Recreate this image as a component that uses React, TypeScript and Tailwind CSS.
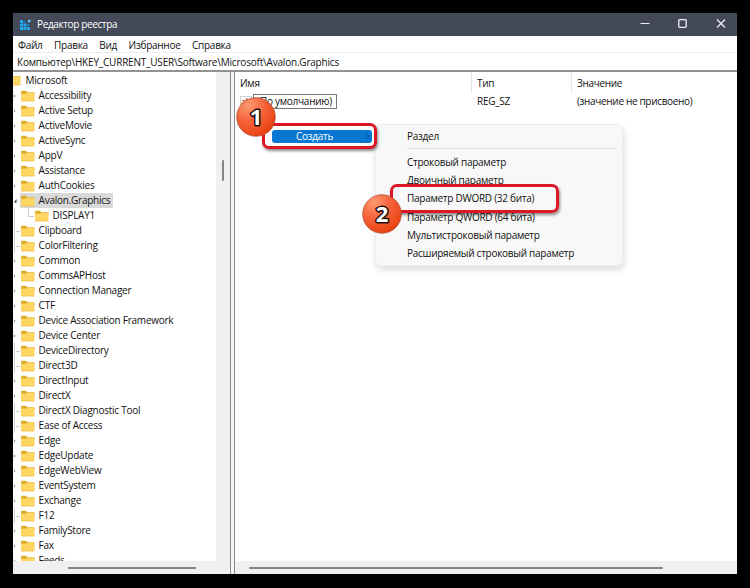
type TreeItem = { name: string; kind: 'closed' | 'open' | 'leaf' | 'child' }

const tree: TreeItem[] = [
  { name: 'Accessibility', kind: 'closed' },
  { name: 'Active Setup', kind: 'closed' },
  { name: 'ActiveMovie', kind: 'closed' },
  { name: 'ActiveSync', kind: 'closed' },
  { name: 'AppV', kind: 'closed' },
  { name: 'Assistance', kind: 'closed' },
  { name: 'AuthCookies', kind: 'closed' },
  { name: 'Avalon.Graphics', kind: 'open' },
  { name: 'DISPLAY1', kind: 'child' },
  { name: 'Clipboard', kind: 'leaf' },
  { name: 'ColorFiltering', kind: 'leaf' },
  { name: 'Common', kind: 'closed' },
  { name: 'CommsAPHost', kind: 'closed' },
  { name: 'Connection Manager', kind: 'closed' },
  { name: 'CTF', kind: 'closed' },
  { name: 'Device Association Framework', kind: 'closed' },
  { name: 'Device Center', kind: 'closed' },
  { name: 'DeviceDirectory', kind: 'leaf' },
  { name: 'Direct3D', kind: 'leaf' },
  { name: 'DirectInput', kind: 'closed' },
  { name: 'DirectX', kind: 'closed' },
  { name: 'DirectX Diagnostic Tool', kind: 'leaf' },
  { name: 'Ease of Access', kind: 'leaf' },
  { name: 'Edge', kind: 'closed' },
  { name: 'EdgeUpdate', kind: 'closed' },
  { name: 'EdgeWebView', kind: 'closed' },
  { name: 'EventSystem', kind: 'closed' },
  { name: 'Exchange', kind: 'closed' },
  { name: 'F12', kind: 'leaf' },
  { name: 'FamilyStore', kind: 'closed' },
  { name: 'Fax', kind: 'closed' },
  { name: 'Feeds', kind: 'closed' },
]

const createItems = [
  'Строковый параметр',
  'Двоичный параметр',
  'Параметр DWORD (32 бита)',
  'Параметр QWORD (64 бита)',
  'Мультистроковый параметр',
  'Расширяемый строковый параметр',
]

function FolderIcon() {
  return (
    <svg width="14" height="12" viewBox="0 0 14 12" className="block shrink-0">
      <path d="M0 1.5Q0 .7.8.7H5l1.3 1.5h6.4q.8 0 .8.9V5H0z" fill="#dfae2c" />
      <path d="M0 3.8H5L6.4 2.8h6.3q.8 0 .8.9v6.7q0 .9-.8.9H.8q-.8 0-.8-.9z" fill="#fdd663" />
      <path d="M.4 10.9h12.7" stroke="#efbd45" strokeWidth=".7" />
    </svg>
  )
}

function TreeMarker({ kind }: { kind: TreeItem['kind'] }) {
  return (
    <svg width="7" height="15" viewBox="0 0 7 15" className="block shrink-0">
      {kind === 'closed' && <path d="M1 6.8l1 1.2L1 9.2" fill="none" stroke="#8a8a8a" />}
      {kind === 'open' && <path d="M1 9.5h2.5V6z" fill="#222" />}
      {kind === 'leaf' && <path d="M1.5 0v15M3 8.5h4" stroke="#cfcfcf" />}
      {kind === 'child' && <path d="M1.5 0v15" stroke="#cfcfcf" />}
    </svg>
  )
}

function TreeRow({ item }: { item: TreeItem }) {
  return (
    <div className="flex h-[15.03px] shrink-0 items-center">
      <TreeMarker kind={item.kind} />
      {item.kind === 'child' && (
        <svg width="14" height="15" viewBox="0 0 14 15" className="block shrink-0">
          <path d="M8.5 0v8.5H14" fill="none" stroke="#c8c8c8" />
        </svg>
      )}
      <div
        className={`flex h-[15px] items-center gap-[3.6px] pl-[1px] pr-[3px] ${
          item.kind === 'open' ? 'bg-[#d9d9d9]' : ''
        }`}
      >
        <FolderIcon />
        <span>{item.name}</span>
      </div>
    </div>
  )
}

function Badge({ n }: { n: number }) {
  return (
    <svg width="44" height="44" viewBox="0 0 44 44" className="block">
      <defs>
        <radialGradient id={`badge${n}`} cx=".3" cy=".2" r=".85">
          <stop offset="0" stopColor="#fb9a72" />
          <stop offset=".5" stopColor="#f7623a" />
          <stop offset="1" stopColor="#e8400f" />
        </radialGradient>
      </defs>
      <circle cx="22" cy="22" r="19.3" fill={`url(#badge${n})`} stroke="#a8492f" strokeWidth=".7" />
      <text
        x="22"
        y="29.5"
        textAnchor="middle"
        fontSize="22"
        fontWeight="700"
        fill="#fff"
        stroke="#1c0d08"
        strokeWidth="3"
        paintOrder="stroke"
        strokeLinejoin="round"
      >
        {n}
      </text>
    </svg>
  )
}

function TitleBar() {
  return (
    <header className="flex h-[23px] shrink-0 items-center justify-between bg-[#444959] text-white">
      <div className="flex items-center gap-[5px] pl-[6px]">
        <svg width="13" height="12" viewBox="0 0 13 12" className="block">
          <path d="M1 1h3v3H1zM1 4.5h3v3H1zM1 8h3v3H1zM4.5 4.5h3v3h-3zM4.5 8h3v3h-3zM8 8h3v3H8z" fill="#21a9ed" />
          <path d="M4.5 2h2v2h-2zM8 5h2v2H8z" fill="#0f7fcb" />
          <path d="M9 1l2.5-.5V3L9 3.5z" fill="#55cbff" />
        </svg>
        <h1 className="tracking-[-0.37px]">Редактор реестра</h1>
      </div>
      <svg width="100" height="23" viewBox="0 0 100 23" fill="none" stroke="#eef0f4" className="block">
        <path d="M3.5 10.5h9" />
        <rect x="41.8" y="6.7" width="7.4" height="7.6" rx=".8" strokeWidth="1.3" />
        <path d="M80 6.5l8 8M88 6.5l-8 8" strokeWidth="1.2" />
      </svg>
    </header>
  )
}

function TreePane() {
  return (
    <nav className="flex w-[217px] shrink-0 flex-col">
      <div className="flex min-h-0 flex-1">
        <div className="flex min-w-0 flex-1 flex-col overflow-hidden whitespace-nowrap tracking-[-0.25px]">
          <div className="flex h-[16px] shrink-0 items-center">
            <div className="flex w-[8px] shrink-0 justify-end overflow-hidden">
              <FolderIcon />
            </div>
            <span className="pl-[4.5px]">Microsoft</span>
          </div>
          {tree.map((item) => (
            <TreeRow key={item.name} item={item} />
          ))}
        </div>
        <div className="flex w-[14px] shrink-0 justify-center bg-[#f0f0f0] pt-[88px]">
          <div className="h-[21px] w-[2px] rounded bg-[#858585]" />
        </div>
      </div>
      <div className="flex h-[13px] shrink-0 items-center bg-[#f0f0f0] pl-[55px]">
        <div className="h-[2px] w-[128px] rounded bg-[#858585]" />
      </div>
    </nav>
  )
}

function CreateMenu() {
  return (
    <div className="absolute left-[362px] top-[111px] h-[142px] w-[248px] rounded-md border border-[#ededed] bg-[#f8f8f8] pl-[31px] pr-[5px] shadow-[1px_4px_7px_rgba(0,0,0,0.13)]">
      <div className="flex h-[22px] items-center">Раздел</div>
      <div className="mb-[4px] mt-[1px] h-px bg-[#dedede]" />
      {createItems.map((label) => (
        <div key={label} className="flex h-[18.35px] items-center whitespace-nowrap">
          {label}
        </div>
      ))}
    </div>
  )
}

export default function App() {
  return (
    <div className="h-[588px] w-[750px] overflow-hidden bg-black p-[13px] font-['Open_Sans','Noto_Sans',sans-serif] text-[10px] leading-[15px] tracking-[-0.27px] text-[#111]">
      <div className="relative flex h-[561px] w-[724px] flex-col bg-white">
        <TitleBar />
        <div className="flex h-[17px] shrink-0 items-center gap-[11.5px] border-b border-[#ededed] pl-[5px] pt-[2px]">
          {['Файл', 'Правка', 'Вид', 'Избранное', 'Справка'].map((m) => (
            <span key={m}>{m}</span>
          ))}
        </div>
        <div className="flex h-[19px] shrink-0 items-center border-b-2 border-[#929292] pl-[4px] pt-[2px] tracking-[-0.2px]">
          Компьютер\HKEY_CURRENT_USER\Software\Microsoft\Avalon.Graphics
        </div>
        <div className="flex min-h-0 flex-1">
          <TreePane />
          <div className="w-[5px] shrink-0 border-x border-[#8c8c8c] bg-[#f4f4f4]" />
          <main className="flex min-w-0 flex-1 flex-col">
            <div className="flex min-h-0 flex-1">
              <section className="w-[237px] pl-[5px]">
                <div className="flex h-[21px] items-center border-r border-[#e5e5e5] pt-px">Имя</div>
                <div className="flex h-[16px] items-center">
                  <span className="flex h-[11px] w-[12px] items-center border border-[#cfcfcf] text-[8px] font-bold text-[#d3412d]">
                    ab
                  </span>
                  <span className="ml-px flex h-[15px] w-[84px] items-center justify-end whitespace-nowrap border border-[#777] pr-[4px]">
                    (По умолчанию)
                  </span>
                </div>
              </section>
              <section className="w-[100px]">
                <div className="flex h-[21px] items-center border-r border-[#e5e5e5] pl-[5px] pt-px">Тип</div>
                <div className="flex h-[16px] items-center pl-[5px]">REG_SZ</div>
              </section>
              <section className="flex-1 pl-[5px] tracking-[-0.33px]">
                <div className="flex h-[21px] items-center pt-px">Значение</div>
                <div className="flex h-[16px] items-center">(значение не присвоено)</div>
              </section>
            </div>
            <div className="flex h-[13px] shrink-0 items-center bg-[#f0f0f0] pl-[14px]">
              <div className="h-[2px] w-[414px] rounded bg-[#858585]" />
            </div>
          </main>
        </div>

        <CreateMenu />
        <div className="absolute left-[249px] top-[110px] h-[26px] w-[115px] rounded-[7px] border-[3px] border-[#dc1826] bg-white pl-[7px] pr-[1px] pt-[3.5px] shadow-[1px_2px_3px_rgba(0,0,0,0.45)]">
          <div className="flex h-[13px] w-[100px] items-center rounded-[3px] bg-[#0877d1] pl-[24px] text-white">
            <span className="flex-1">Создать</span>
            <svg width="8" height="10" viewBox="0 0 8 10" className="block">
              <path d="M2 2l3 3-3 3" fill="none" stroke="#064d8d" />
            </svg>
          </div>
        </div>
        <div className="absolute left-[377px] top-[171px] h-[29px] w-[169px] rounded-[7px] border-[3px] border-[#dc1826] shadow-[1px_2px_3px_rgba(0,0,0,0.45)]" />
        <div className="absolute left-[220.5px] top-[81.5px]">
          <Badge n={1} />
        </div>
        <div className="absolute left-[346.7px] top-[178.5px]">
          <Badge n={2} />
        </div>
      </div>
    </div>
  )
}
